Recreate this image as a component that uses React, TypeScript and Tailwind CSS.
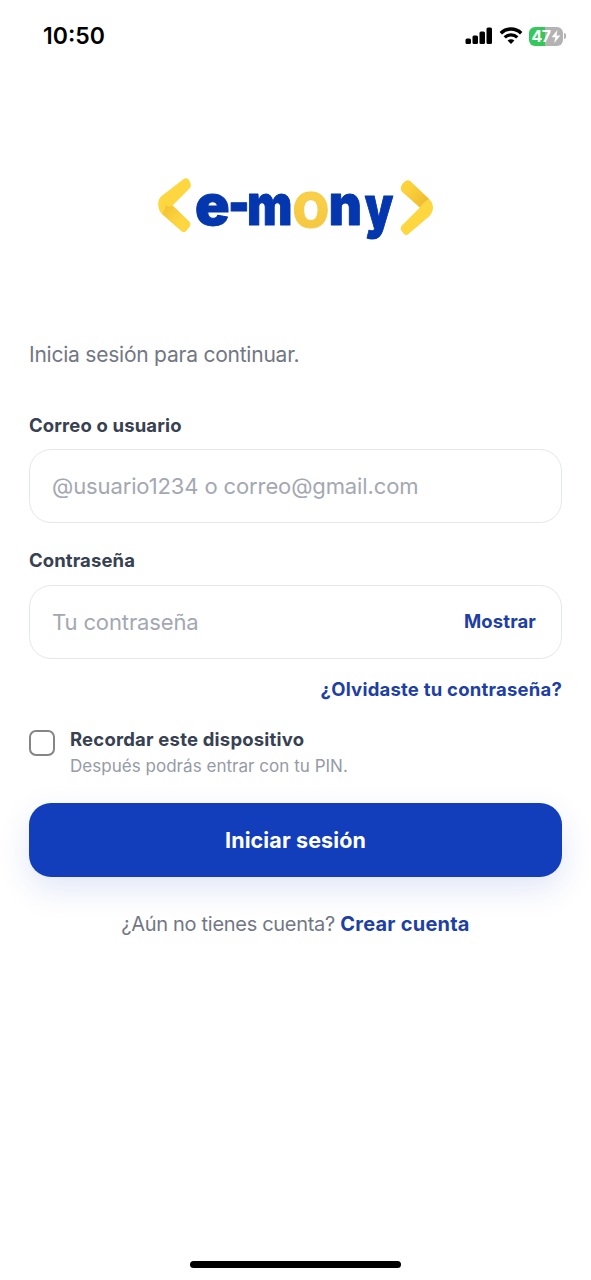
import { useState } from 'react';

function StatusBar() {
  return (
    <div className="flex h-[72px] items-center justify-between pl-[43px] pr-[25px]">
      <span className="text-[23px] leading-none font-semibold text-black">10:50</span>
      <div className="flex items-center">
        <svg width="28" height="18" viewBox="0 0 28 18" fill="#000">
          <rect x="0.500" y="11.500" width="5.500" height="5.500" rx="1.500" />
          <rect x="7.500" y="8.500" width="5.500" height="8.500" rx="1.500" />
          <rect x="14.500" y="4.500" width="5.500" height="12.500" rx="1.500" />
          <rect x="21.500" y="0.500" width="5.500" height="16.500" rx="1.500" />
        </svg>
        <svg className="ml-[6px]" width="24" height="18" viewBox="0 0 24 18" fill="none" stroke="#000">
          <path d="M1.800 6.200A14.600 14.600 0 0 1 22.200 6.200" strokeWidth="3.400" />
          <path d="M5.700 10.400A9 9 0 0 1 18.300 10.400" strokeWidth="3.200" />
          <path d="M12 17L8.600 13.600A4.900 4.900 0 0 1 15.400 13.600Z" fill="#000" stroke="none" />
        </svg>
        <div className="ml-[6px] flex h-[19px] w-[34px] items-center justify-center rounded-[6px] bg-[linear-gradient(90deg,#34c759_47%,#b3b3b3_47%)] text-white">
          <span className="text-[16px] leading-none font-bold tracking-[-0.5px]">47</span>
          <svg width="10" height="13" viewBox="0 0 10 13" fill="currentColor">
            <path d="M6.400 0L0.600 7.200H4.300L3.200 13L9.400 5.500H5.500Z" />
          </svg>
        </div>
        <div className="ml-px h-[6px] w-[2px] rounded-r-full bg-[#b3b3b3]" />
      </div>
    </div>
  );
}

function Logo() {
  return (
    <svg width="280" height="70" viewBox="156 174 280 70" aria-label="e-mony">
      <defs>
        <linearGradient id="fold-left" gradientUnits="userSpaceOnUse" x1="165" y1="206" x2="180" y2="221">
          <stop offset="0" stopColor="#f2c235" />
          <stop offset="1" stopColor="#fdd640" />
        </linearGradient>
        <linearGradient id="fold-right" gradientUnits="userSpaceOnUse" x1="424" y1="205" x2="408" y2="190">
          <stop offset="0" stopColor="#efbb30" />
          <stop offset="1" stopColor="#fbd13c" />
        </linearGradient>
        <linearGradient id="ring" x1="0" y1="0" x2="0" y2="1">
          <stop offset="0" stopColor="#fcd84e" />
          <stop offset="1" stopColor="#f3c43e" />
        </linearGradient>
      </defs>

      {/* Left bracket */}
      <path
        d="M183 179.500Q187 176.500 189.200 180.500L190.800 184Q191.500 187 189 189L172.500 205.500L189.500 222Q191.200 224 189.500 226.500L186 231Q184 233 181.500 231L161 213Q158 209 158.200 203Q158.500 198.500 162 195.700Z"
        fill="#fdd640"
      />
      <path d="M166 205Q169 208 172.500 205.500L189.500 222Q191.200 224 189.500 226.500L186 231Q184 233 181.500 231L162 214Q165 210 166 205Z" fill="url(#fold-left)" />

      {/* Wordmark, every letter squeezed to its own width */}
      <g fontFamily="Inter, sans-serif" fontWeight="900" fontSize="56" fill="#0436ad" stroke="#0436ad" strokeWidth="1" strokeLinejoin="round">
        <text x="191.200" y="225" transform="scale(1.02 1)">e</text>
        <text x="278" y="223" transform="scale(0.82 1)">-</text>
        <text x="287.200" y="225" transform="scale(0.86 1)">m</text>
        <text x="304.200" y="227.500" transform="scale(0.96 1)" fontSize="64" fontWeight="700" fill="url(#ring)" stroke="#f6ca42" strokeWidth="1">o</text>
        <text x="361.200" y="225" transform="scale(0.91 1)">n</text>
        <text x="456" y="227.500" transform="scale(0.8 1)">y</text>
      </g>

      {/* Right bracket */}
      <path
        d="M403 183L405 181.500Q408 179.500 411 182L429.500 199.500Q433 203 433 208Q432.500 213 429 216.500L409 233.500Q406 236.500 403.500 233.500L401 230Q400 227 402.500 225L420 207.500L402.500 192Q400 189.500 401.200 186.500Z"
        fill="#fdd640"
      />
      <path d="M401.200 186.500L405 181.500Q408 179.500 411 182L429 199Q424 201 420 207.500L402.500 192Q400 189.500 401.200 186.500Z" fill="url(#fold-right)" />
    </svg>
  );
}

export default function App() {
  const [showPassword, setShowPassword] = useState(false);
  const [remember, setRemember] = useState(false);

  return (
    <div className="flex h-[1280px] w-full flex-col bg-white font-[Inter,sans-serif]">
      <StatusBar />

      <div className="mt-[102px] flex justify-center">
        <Logo />
      </div>

      <form className="mt-[95px] flex flex-col px-[29px]" onSubmit={(e) => e.preventDefault()}>
        <p className="text-[21px] leading-[31px] tracking-[-0.23px] text-[#717784]">Inicia sesión para continuar.</p>

        <label htmlFor="user" className="mt-[42px] text-[18.5px] leading-[26px] font-[650] tracking-[0.14px] text-[#374151]">
          Correo o usuario
        </label>
        <input
          id="user"
          placeholder="@usuario1234 o correo@gmail.com"
          className="mt-[11px] h-[74px] rounded-[22px] border border-[#e5e7eb] px-[22px] text-[22px] tracking-[-0.12px] outline-none placeholder:text-[#a3a8b1]"
        />

        <label htmlFor="password" className="mt-[24px] text-[18.5px] leading-[26px] font-[650] tracking-[0.1px] text-[#374151]">
          Contraseña
        </label>
        <div className="mt-[12px] flex h-[74px] items-center rounded-[22px] border border-[#e5e7eb] pr-[25px] pl-[22px]">
          <input
            id="password"
            type={showPassword ? 'text' : 'password'}
            placeholder="Tu contraseña"
            className="min-w-0 flex-1 text-[22px] tracking-[-0.12px] outline-none placeholder:text-[#a3a8b1]"
          />
          <button
            type="button"
            onClick={() => setShowPassword(!showPassword)}
            className="text-[18.5px] font-[650] tracking-[0.1px] text-[#1e3fa4]"
          >
            {showPassword ? 'Ocultar' : 'Mostrar'}
          </button>
        </div>

        <a href="#" className="mt-[17px] self-end text-[18.5px] leading-[26px] font-[650] tracking-[0.22px] text-[#1e3fa4]">
          ¿Olvidaste tu contraseña?
        </a>

        <label className="mt-[25px] flex gap-[15px]">
          <input
            type="checkbox"
            checked={remember}
            onChange={(e) => setRemember(e.target.checked)}
            className="mt-[3px] size-[26px] shrink-0 appearance-none rounded-[7px] border-2 border-[#858585] checked:bg-[#123dbb]"
          />
          <span className="flex flex-col">
            <span className="-mt-px text-[18.5px] leading-[27px] font-[650] tracking-[0.2px] text-[#374151]">
              Recordar este dispositivo
            </span>
            <span className="text-[17px] leading-[26px] tracking-[0.03px] text-[#959ba7]">Después podrás entrar con tu PIN.</span>
          </span>
        </label>

        <button
          type="submit"
          className="mt-[24px] h-[74px] rounded-[22px] bg-[#123dbb] text-[21.5px] font-bold tracking-[0.12px] text-white shadow-[0_12px_32px_rgba(18,61,187,0.13)]"
        >
          Iniciar sesión
        </button>

        <p className="mt-[32px] text-center text-[20px] leading-[30px] tracking-[-0.3px] text-[#717784]">
          ¿Aún no tienes cuenta?{' '}
          <a href="#" className="font-bold tracking-[0.23px] text-[#1e3fa4]">
            Crear cuenta
          </a>
        </p>
      </form>

      {/* Home indicator */}
      <div className="mt-auto mb-[12px] h-[7px] w-[211px] self-center rounded-full bg-black" />
    </div>
  );
}
